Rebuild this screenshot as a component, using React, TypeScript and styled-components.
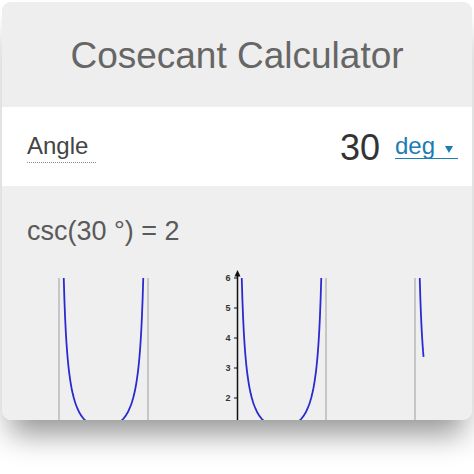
import React from 'react';
import styled, { createGlobalStyle } from 'styled-components';

const GlobalStyle = createGlobalStyle`
  body {
    margin: 0;
    background: #ffffff;
    font-family: 'Liberation Sans', Arial, sans-serif;
  }
`;

const Page = styled.div`
  width: 474px;
  height: 474px;
  padding-top: 2px;
  box-sizing: border-box;
  background: #ffffff;
`;

const Card = styled.div`
  width: 470px;
  margin: 0 2px;
  border-radius: 9px;
  overflow: hidden;
  background: #efefef;
  box-shadow: 0 22px 30px -8px rgba(0, 0, 0, 0.42);
`;

const Header = styled.h1`
  margin: 0;
  height: 105px;
  line-height: 107px;
  text-align: center;
  font-size: 37px;
  font-weight: normal;
  color: #666666;
  background: #eeeeee;
`;

const InputRow = styled.div`
  display: flex;
  align-items: center;
  height: 79px;
  padding: 0 14px 0 25px;
  background: #ffffff;
`;

const Label = styled.span`
  font-size: 24px;
  line-height: 24px;
  color: #444444;
  padding: 4px 8px 4px 0;
  border-bottom: 1px dotted #8a8a8a;
`;

const Value = styled.span`
  margin-left: auto;
  margin-right: 15px;
  margin-top: 3px;
  font-size: 36px;
  line-height: 36px;
  color: #333333;
`;

const Unit = styled.span`
  display: inline-flex;
  align-items: center;
  gap: 10px;
  padding-right: 5px;
  font-size: 24px;
  line-height: 24px;
  color: #1b7db4;
  border-bottom: 1.5px solid #1b7db4;
  cursor: pointer;
`;

const Caret = styled.span`
  width: 0;
  height: 0;
  margin-top: 7px;
  border-left: 4.5px solid transparent;
  border-right: 4.5px solid transparent;
  border-top: 7px solid #1b7db4;
`;

const Results = styled.div`
  padding-top: 30px;
  background: #efefef;
`;

const Answer = styled.div`
  padding-left: 25px;
  font-size: 27px;
  line-height: 31px;
  color: #5a5a5a;
`;

const Chart = styled.svg`
  display: block;
  margin-top: 18px;
`;

// page coordinates: x = 237 + deg * 89 / 180, y = 458 - 30 * value
const originX = 237;
const halfPeriod = 89;
const valueY = (v: number) => 458 - 30 * v;

const branch = (start: number, thetaEnd: number) => {
  const theta0 = Math.asin(1 / 6);
  const pts: string[] = [];
  const steps = 120;
  for (let i = 0; i <= steps; i++) {
    const t = theta0 + ((thetaEnd - theta0) * i) / steps;
    const x = start + (t / Math.PI) * halfPeriod;
    const y = valueY(1 / Math.sin(t));
    pts.push(`${x.toFixed(2)},${y.toFixed(2)}`);
  }
  return 'M' + pts.join(' L');
};

const CscChart = () => {
  const asymptotes = [59, 148, 326, 415];
  const theta0 = Math.asin(1 / 6);
  const curves = [
    branch(originX - 2 * halfPeriod, Math.PI - theta0),
    branch(originX, Math.PI - theta0),
    branch(originX + 2 * halfPeriod, 0.3014),
  ];
  const ticks = [6, 5, 4, 3, 2];

  return (
    <Chart width={470} height={155} viewBox="2 265 470 155">
      {asymptotes.map((x) => (
        <line key={x} x1={x} x2={x} y1={278} y2={425} stroke="#b9b9b9" strokeWidth={1.5} />
      ))}
      {curves.map((d, i) => (
        <path key={i} d={d} fill="none" stroke="#2a2ad0" strokeWidth={1.8} />
      ))}
      <line x1={237.5} x2={237.5} y1={274} y2={425} stroke="#111" strokeWidth={1.5} />
      <polygon points="237.5,270 234.5,276.5 240.5,276.5" fill="#111" />
      {ticks.map((v) => (
        <g key={v}>
          <line x1={234} x2={237.5} y1={valueY(v)} y2={valueY(v)} stroke="#111" strokeWidth={1} />
          <text
            x={230.5}
            y={valueY(v) + 3.2}
            textAnchor="end"
            fontSize={9}
            fontWeight="bold"
            fill="#333"
            fontFamily="'Liberation Sans', Arial, sans-serif"
          >
            {v}
          </text>
        </g>
      ))}
    </Chart>
  );
};

const App = () => (
  <Page>
    <GlobalStyle />
    <Card>
      <Header>Cosecant Calculator</Header>
      <InputRow>
        <Label>Angle</Label>
        <Value>30</Value>
        <Unit>
          deg
          <Caret />
        </Unit>
      </InputRow>
      <Results>
        <Answer>csc(30 °) = 2</Answer>
        <CscChart />
      </Results>
    </Card>
  </Page>
);

export default App;
